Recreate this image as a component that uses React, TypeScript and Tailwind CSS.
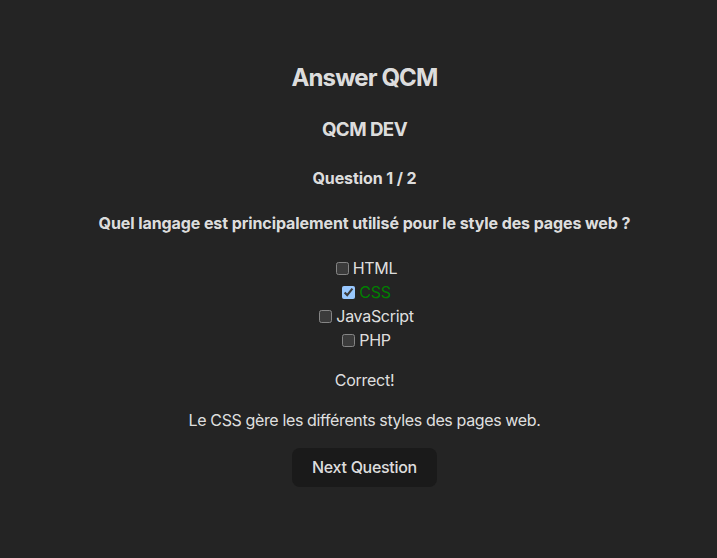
import { useState } from 'react';

const options = ['HTML', 'CSS', 'JavaScript', 'PHP'];
const correct = 'CSS';

export default function App() {
  const [selected, setSelected] = useState<string | null>('CSS');

  return (
    <div className="min-h-screen bg-[#242424] text-[rgba(255,255,255,0.87)] font-['Inter',sans-serif] scheme-dark">
      <div className="flex flex-col items-center text-center pt-[60px] pl-[12px]">
        <h2 className="text-[24px] leading-[36px] font-bold tracking-[-0.9px]">Answer QCM</h2>
        <h3 className="mt-[20px] text-[18.72px] leading-[28px] font-bold tracking-[-0.55px]">QCM DEV</h3>
        <h4 className="mt-[22px] text-[16px] leading-[24px] font-bold tracking-[-0.1px]">Question 1 / 2</h4>
        <h4 className="mt-[21px] text-[16px] leading-[24px] font-bold tracking-[-0.09px]">
          Quel langage est principalement utilisé pour le style des pages web ?
        </h4>

        <div className="mt-[21px] flex flex-col items-center tracking-[-0.3px]">
          {options.map((opt) => (
            <label key={opt} className="flex items-center h-[24px] text-[16px] leading-[24px]">
              <input
                type="checkbox"
                checked={selected === opt}
                onChange={() => setSelected(opt)}
                className="w-[13px] h-[13px] ml-[4px] mr-[4px] my-[3px]"
              />
              <span className={selected === opt && opt === correct ? 'text-[green]' : ''}>{opt}</span>
            </label>
          ))}
        </div>

        <p className="mt-[16px] text-[16px] leading-[24px] tracking-[-0.25px]">Correct!</p>
        <p className="mt-[16px] text-[16px] leading-[24px] tracking-[-0.37px]">
          Le CSS gère les différents styles des pages web.
        </p>

        <button className="mt-[16px] h-[39px] px-[19.2px] rounded-[8px] border border-transparent bg-[#1a1a1a] text-[16px] leading-[19px] font-medium tracking-[-0.3px] cursor-pointer">
          Next Question
        </button>
      </div>
    </div>
  );
}
